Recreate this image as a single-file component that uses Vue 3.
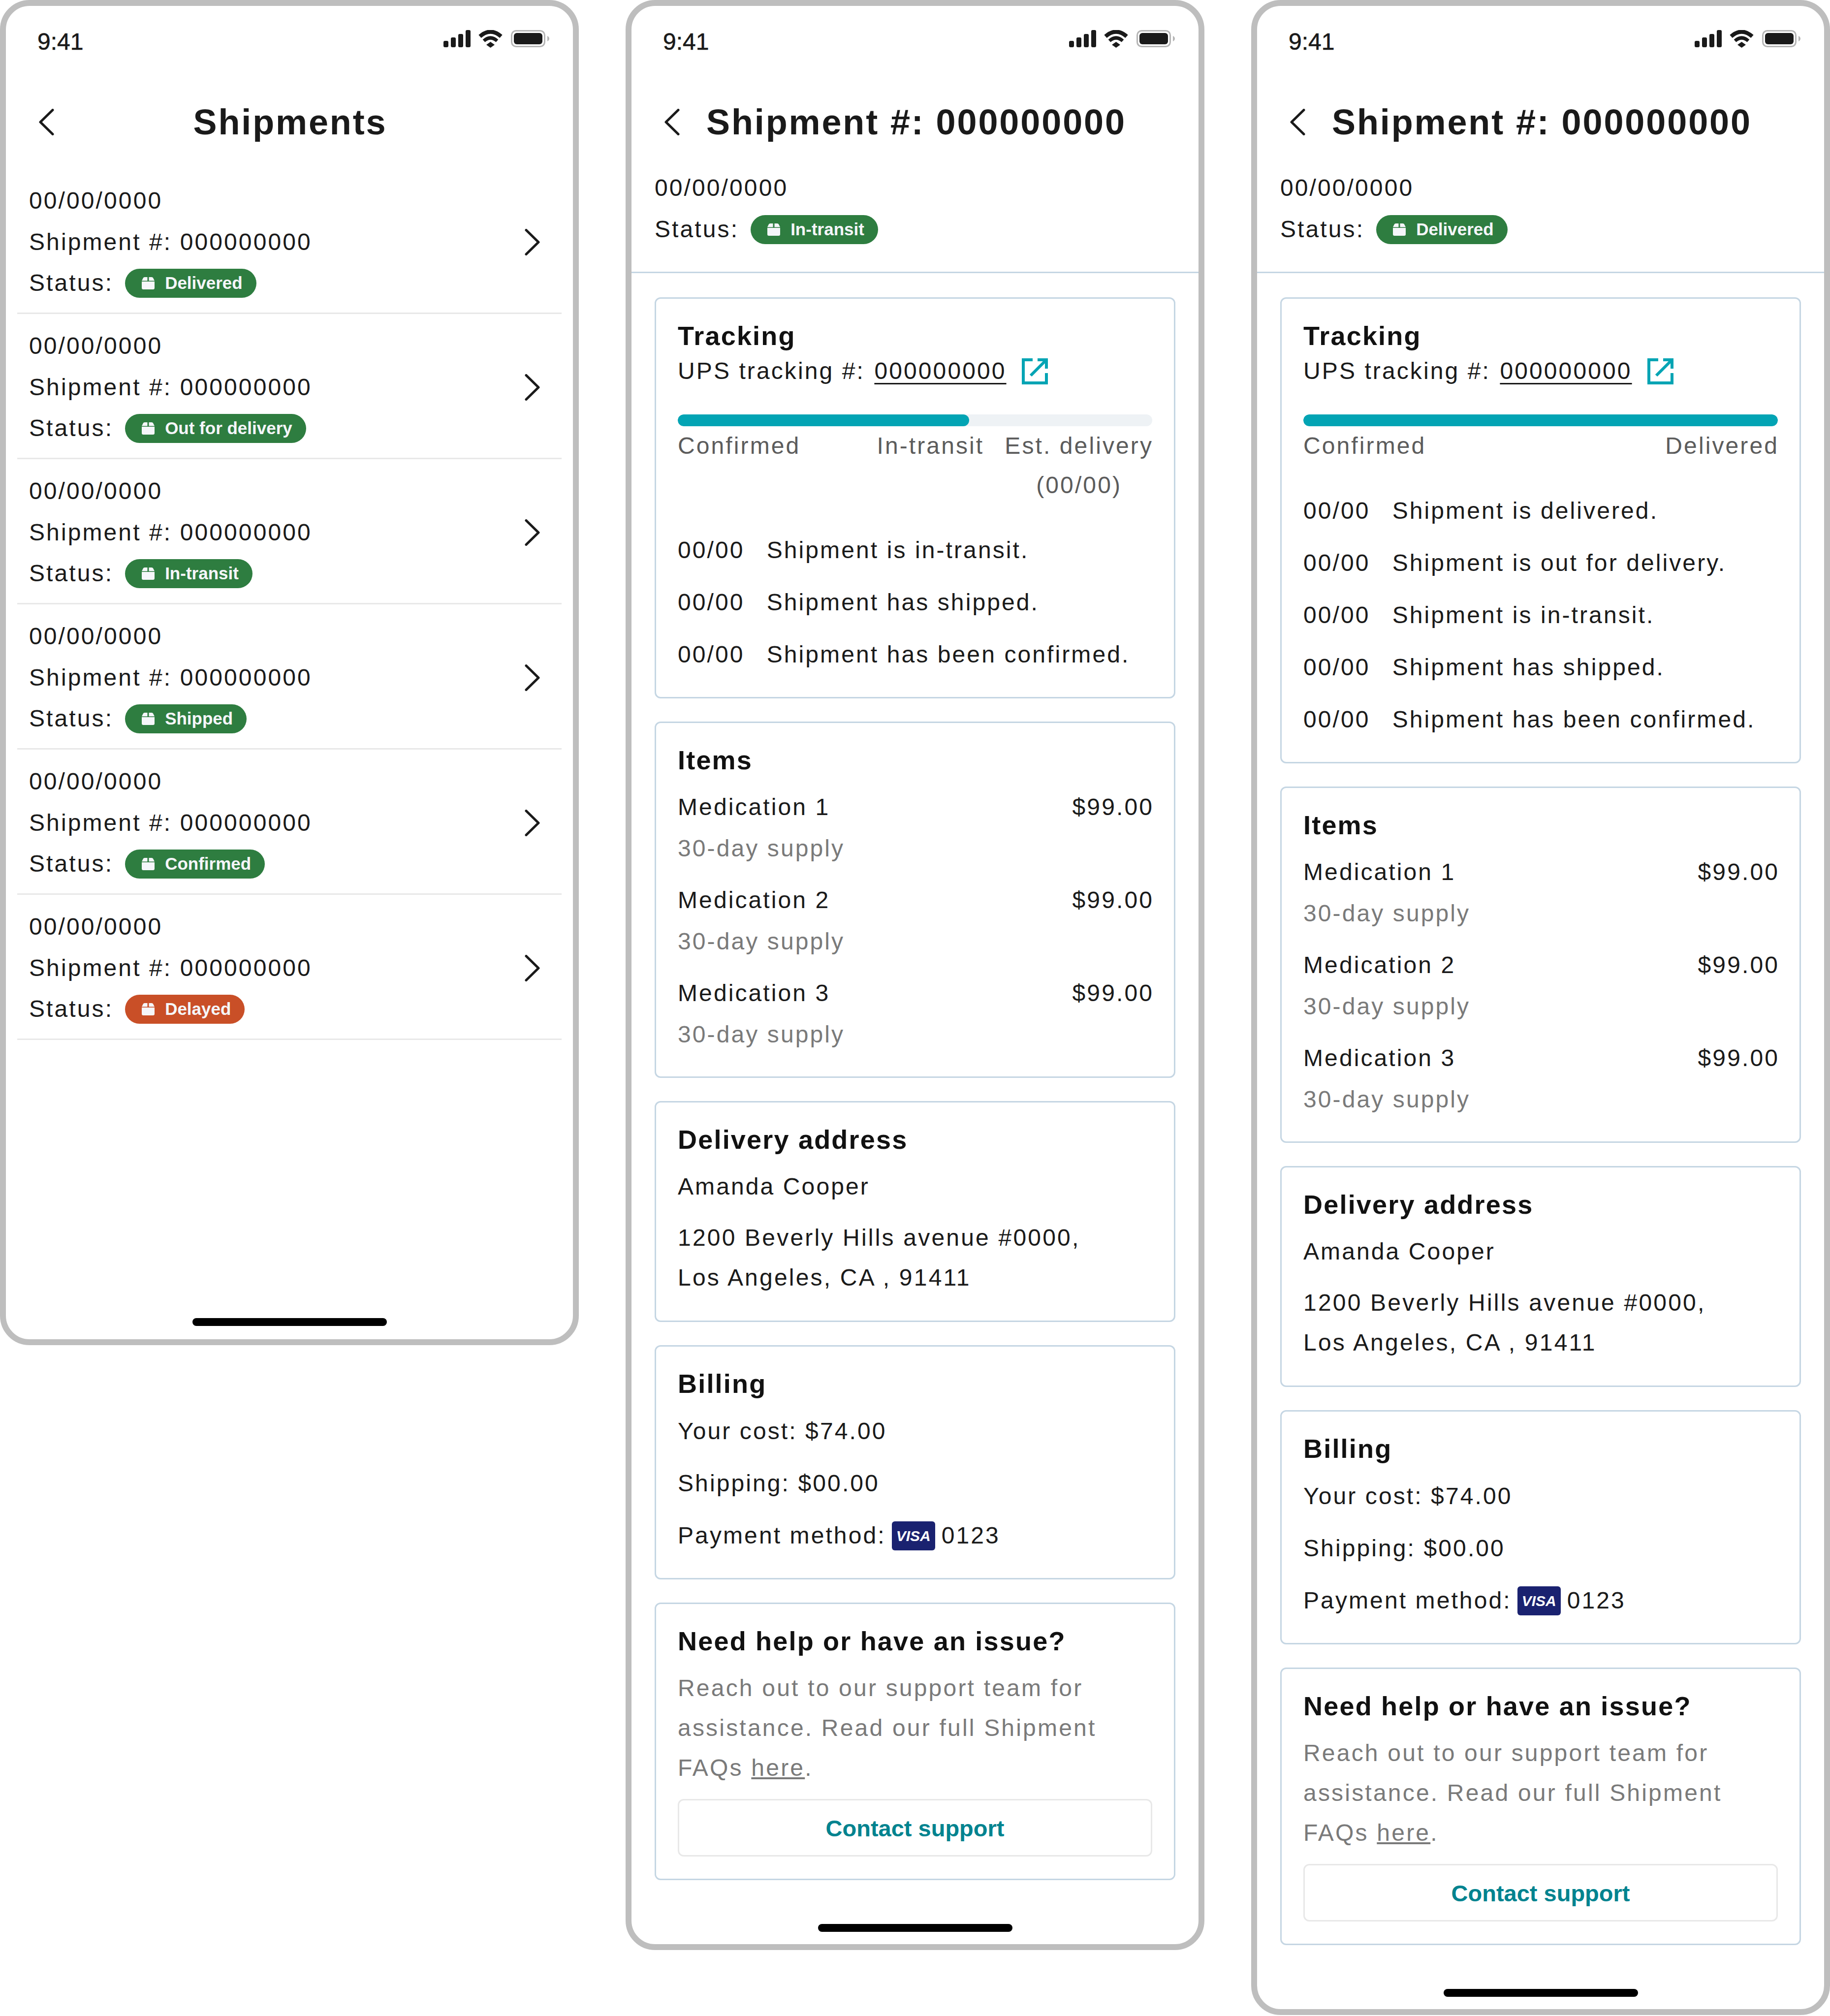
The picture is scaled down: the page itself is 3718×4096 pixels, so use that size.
<script setup>
const shipments = [
  { label: 'Delivered', tone: 'ok' },
  { label: 'Out for delivery', tone: 'ok' },
  { label: 'In-transit', tone: 'ok' },
  { label: 'Shipped', tone: 'ok' },
  { label: 'Confirmed', tone: 'ok' },
  { label: 'Delayed', tone: 'late' }
]

const items = ['Medication 1', 'Medication 2', 'Medication 3']

const details = [
  {
    status: 'In-transit',
    fill: 61.4,
    steps: ['Confirmed', 'In-transit'],
    events: ['Shipment is in-transit.', 'Shipment has shipped.', 'Shipment has been confirmed.'],
    last: 'est'
  },
  {
    status: 'Delivered',
    fill: 100,
    steps: ['Confirmed'],
    events: [
      'Shipment is delivered.',
      'Shipment is out for delivery.',
      'Shipment is in-transit.',
      'Shipment has shipped.',
      'Shipment has been confirmed.'
    ],
    last: 'done'
  }
]
</script>

<template>
  <div class="page">
    <section class="phone phone-list">
      <div class="statusbar">
        <span class="clock">9:41</span>
        <div class="sys-icons">
          <svg width="55" height="35" viewBox="0 0 55 35"><rect x="0" y="22" width="10" height="13" rx="3" /><rect x="15" y="15" width="10" height="20" rx="3" /><rect x="30" y="8" width="10" height="27" rx="3" /><rect x="45" y="0" width="10" height="35" rx="3" /></svg>
          <svg width="50" height="36" viewBox="0 0 50 36"><path class="wave" stroke-width="8" d="M3 13Q24.500-6 46 13" /><path class="wave" stroke-width="7" d="M11 22Q24.500 10 38 22" /><path d="M16 30L24.500 24 33 30 24.500 36z" /></svg>
          <svg width="78" height="35" viewBox="0 0 78 35"><rect x="1.500" y="1.500" width="67" height="32" rx="9" fill="none" stroke="#b5b5b5" stroke-width="3" /><rect x="6" y="6" width="58" height="23" rx="6" /><path fill="#b5b5b5" d="M74 12c2.500 1 4 3 4 5.500s-1.500 4.500-4 5.500z" /></svg>
        </div>
      </div>
      <header class="topbar topbar-center">
        <svg class="back" width="31" height="54" viewBox="0 0 31 54"><path d="M28 2.500L3 27l25 24.500" /></svg>
        <h1>Shipments</h1>
        <span></span>
      </header>
      <div class="list">
        <div v-for="s in shipments" :key="s.label" class="row">
          <div>
            <div class="line">00/00/0000</div>
            <div class="line">Shipment #: 000000000</div>
            <div class="line status-line row-status">
              Status:
              <span class="pill" :class="s.tone">
                <svg width="26" height="25" viewBox="0 0 26 25"><path d="M0 9H26V22a3 3 0 0 1-3 3H3a3 3 0 0 1-3-3zM0 7.500L3 1.500Q3.700 0 6 0H11.500V7.500zM14.500 0H20Q22.300 0 23 1.500L26 7.500H14.500z" /></svg>
                {{ s.label }}
              </span>
            </div>
          </div>
          <svg class="next" width="31" height="54" viewBox="0 0 31 54"><path d="M3 2.500L28 27 3 51.500" /></svg>
        </div>
      </div>
      <div class="homebar homebar-list"></div>
    </section>

    <section v-for="d in details" :key="d.status" class="phone">
      <div class="statusbar">
        <span class="clock">9:41</span>
        <div class="sys-icons">
          <svg width="55" height="35" viewBox="0 0 55 35"><rect x="0" y="22" width="10" height="13" rx="3" /><rect x="15" y="15" width="10" height="20" rx="3" /><rect x="30" y="8" width="10" height="27" rx="3" /><rect x="45" y="0" width="10" height="35" rx="3" /></svg>
          <svg width="50" height="36" viewBox="0 0 50 36"><path class="wave" stroke-width="8" d="M3 13Q24.500-6 46 13" /><path class="wave" stroke-width="7" d="M11 22Q24.500 10 38 22" /><path d="M16 30L24.500 24 33 30 24.500 36z" /></svg>
          <svg width="78" height="35" viewBox="0 0 78 35"><rect x="1.500" y="1.500" width="67" height="32" rx="9" fill="none" stroke="#b5b5b5" stroke-width="3" /><rect x="6" y="6" width="58" height="23" rx="6" /><path fill="#b5b5b5" d="M74 12c2.500 1 4 3 4 5.500s-1.500 4.500-4 5.500z" /></svg>
        </div>
      </div>
      <header class="topbar topbar-left">
        <svg class="back" width="31" height="54" viewBox="0 0 31 54"><path d="M28 2.500L3 27l25 24.500" /></svg>
        <h1>Shipment #: 000000000</h1>
      </header>
      <div class="meta">
        <div class="line">00/00/0000</div>
        <div class="line status-line">
          Status:
          <span class="pill ok">
            <svg width="26" height="25" viewBox="0 0 26 25"><path d="M0 9H26V22a3 3 0 0 1-3 3H3a3 3 0 0 1-3-3zM0 7.500L3 1.500Q3.700 0 6 0H11.500V7.500zM14.500 0H20Q22.300 0 23 1.500L26 7.500H14.500z" /></svg>
            {{ d.status }}
          </span>
        </div>
      </div>

      <div class="cards">
        <article class="card">
          <h2>Tracking</h2>
          <div class="line tracking-line">
            UPS tracking #:&nbsp;<a class="link">000000000</a>
            <svg class="ext" width="53" height="53" viewBox="0 0 53 53"><path d="M22 3H3V50H50V30M18 35L50 3M32 3H50V21" /></svg>
          </div>
          <div class="track"><div class="track-fill" :style="{ width: d.fill + '%' }"></div></div>
          <div class="steps">
            <span v-for="step in d.steps" :key="step">{{ step }}</span>
            <span v-if="d.last === 'est'" class="step-est">Est. delivery<br />(00/00)</span>
            <span v-else>Delivered</span>
          </div>
          <div class="events">
            <div v-for="e in d.events" :key="e" class="event">
              <span class="event-date">00/00</span>
              <span>{{ e }}</span>
            </div>
          </div>
        </article>

        <article class="card">
          <h2>Items</h2>
          <div class="card-body item-list">
            <div v-for="item in items" :key="item">
              <div class="line item-row"><span>{{ item }}</span><span>$99.00</span></div>
              <div class="line muted">30-day supply</div>
            </div>
          </div>
        </article>

        <article class="card">
          <h2>Delivery address</h2>
          <div class="card-body">
            <div class="line">Amanda Cooper</div>
            <div class="address">1200 Beverly Hills avenue #0000,<br />Los Angeles, CA , 91411</div>
          </div>
        </article>

        <article class="card">
          <h2>Billing</h2>
          <div class="card-body billing">
            <div class="line">Your cost: $74.00</div>
            <div class="line">Shipping: $00.00</div>
            <div class="line pay-line">
              Payment method:
              <span class="visa">VISA</span>
              <span class="card-end">0123</span>
            </div>
          </div>
        </article>

        <article class="card card-help">
          <h2>Need help or have an issue?</h2>
          <p class="card-body help">
            Reach out to our support team for<br />assistance. Read our full Shipment<br />FAQs <u>here</u>.
          </p>
          <button class="contact">Contact support</button>
        </article>
      </div>
      <div class="homebar"></div>
    </section>
  </div>
</template>

<style scoped>
.page {
  display: flex;
  align-items: flex-start;
  gap: 95px;
  width: 3718px;
  font-family: "Liberation Sans", Arial, sans-serif;
  font-size: 48px;
  letter-spacing: 3.1px;
  color: #1a1a1a;
}

.phone {
  box-sizing: border-box;
  display: flex;
  flex-direction: column;
  flex: none;
  width: 1176px;
  border: 12px solid #bebebe;
  border-radius: 60px;
  background: #fff;
}

.phone-list {
  height: 2733px;
}

.statusbar {
  display: flex;
  align-items: center;
  justify-content: space-between;
  height: 144px;
  padding: 0 48px 0 64px;
}

.clock {
  letter-spacing: 0;
  -webkit-text-stroke: 0.6px #1a1a1a;
}

.sys-icons {
  display: flex;
  gap: 16px;
  margin-bottom: 10px;
  fill: #1a1a1a;
}

.wave {
  fill: none;
  stroke: #1a1a1a;
}

.topbar {
  height: 184px;
  align-items: center;
}

.topbar h1 {
  margin: 0;
  font-size: 72px;
  font-weight: 700;
  letter-spacing: 2.88px;
}

.topbar-center {
  display: grid;
  grid-template-columns: 1fr auto 1fr;
  padding: 0 64px 0 67px;
}

.topbar-left {
  display: flex;
  gap: 54px;
  padding-left: 67px;
}

.back path,
.next path {
  fill: none;
  stroke: #1a1a1a;
  stroke-width: 5;
  stroke-linecap: round;
  stroke-linejoin: round;
}

.list {
  padding: 3px 23px 0;
}

.row {
  display: flex;
  align-items: center;
  justify-content: space-between;
  padding: 23px 44px 17px 24px;
  border-bottom: 3px solid #e8e8e8;
}

.line {
  height: 84px;
  line-height: 84px;
}

.status-line {
  display: flex;
  align-items: center;
  gap: 24px;
}

.row-status {
  height: 82px;
  line-height: 82px;
  margin-bottom: 2px;
}

.pill {
  display: inline-flex;
  align-items: center;
  gap: 21px;
  height: 59px;
  padding: 0 28px 0 34px;
  border-radius: 30px;
  font-size: 35px;
  font-weight: 700;
  letter-spacing: 0;
  color: #f5f6fa;
  fill: #f5f6fa;
}

.pill.ok {
  background: #2e7d40;
}

.pill.late {
  background: #c94f27;
}

.homebar {
  flex: none;
  align-self: center;
  width: 395px;
  height: 16px;
  margin: 89px 0 25px;
  border-radius: 8px;
  background: #000;
}

.homebar-list {
  margin: auto 0 27px;
}

.meta {
  padding: 0 47px 44px;
  border-bottom: 3px solid #c5d6e3;
}

.cards {
  display: flex;
  flex-direction: column;
  gap: 47px;
  padding: 49px 47px 0;
}

.card {
  padding: 44px;
  border: 3px solid #c5d6e3;
  border-radius: 12px;
}

.card-help {
  padding-bottom: 45px;
}

.card h2 {
  margin: 0 0 -2px;
  font-size: 54px;
  line-height: 63px;
  font-weight: 700;
  letter-spacing: 2.2px;
  color: #111;
}

.card-body {
  margin: 24px 0 0;
}

.tracking-line {
  display: flex;
  align-items: center;
}

.link {
  margin-left: 3px;
  text-decoration: underline;
  text-underline-offset: 8px;
  text-decoration-thickness: 3px;
}

.ext {
  margin-left: 31px;
}

.ext path {
  fill: none;
  stroke: #02a4b4;
  stroke-width: 6;
}

.track {
  height: 24px;
  margin-top: 46px;
  border-radius: 12px;
  background: #eef2f5;
  overflow: hidden;
}

.track-fill {
  height: 100%;
  border-radius: 12px;
  background: #02a4b4;
}

.steps {
  display: flex;
  justify-content: space-between;
  margin-right: -2px;
  line-height: 80px;
  color: #5c5c5c;
}

.steps span:first-child {
  margin-right: auto;
}

.step-est {
  margin-left: 42px;
  text-align: center;
}

.events {
  display: flex;
  flex-direction: column;
  gap: 22px;
  margin-top: 50px;
}

.event {
  display: flex;
  gap: 45px;
  line-height: 84px;
}

.event-date {
  flex: none;
}

.item-list {
  display: flex;
  flex-direction: column;
  gap: 22px;
}

.item-row {
  display: flex;
  justify-content: space-between;
  margin-right: -3px;
}

.muted {
  height: 83px;
  line-height: 83px;
  color: #7a7a7a;
}

.address {
  margin: 21px 0 3px;
  line-height: 81px;
  letter-spacing: 3.2px;
}

.billing {
  display: flex;
  flex-direction: column;
  gap: 22px;
  margin-top: 25px;
}

.pay-line {
  display: flex;
  align-items: center;
  gap: 11px;
}

.visa {
  width: 88px;
  height: 59px;
  margin-left: 1px;
  border-radius: 6px;
  background: #1a2270;
  color: #fff;
  font-size: 30px;
  font-weight: 700;
  font-style: italic;
  line-height: 59px;
  letter-spacing: 0;
  text-align: center;
}

.card-end {
  margin-left: 2px;
}

.help {
  margin-top: 25px;
  line-height: 81px;
  letter-spacing: 3.2px;
  color: #7a7a7a;
}

.contact {
  display: block;
  box-sizing: border-box;
  width: 100%;
  height: 117px;
  margin-top: 23px;
  padding-top: 3px;
  border: 3px solid #e8e8e8;
  border-radius: 12px;
  background: #fff;
  font-family: inherit;
  font-size: 47px;
  font-weight: 700;
  color: #00838f;
}
</style>

<style>
body {
  margin: 0;
  background: #fff;
}
</style>
